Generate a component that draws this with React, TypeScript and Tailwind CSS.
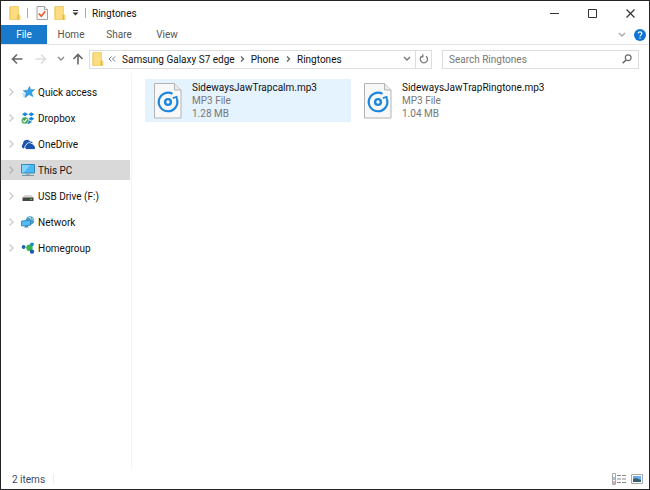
import type { ReactNode } from 'react';

function FolderIcon() {
  return (
    <svg width="12" height="14" viewBox="0 0 12 14" aria-hidden="true">
      <path d="M1 .5h8.500v8l1.500 .8v4.200H1z" fill="#fbdc80" stroke="#edc963" strokeWidth=".8" />
      <path d="M9 8.500l1 .5v4.500H8.500V9z" fill="#e8b93e" />
      <path d="M1 1v12.500" stroke="#f3ca57" />
    </svg>
  );
}

function PropertiesIcon() {
  return (
    <svg width="12" height="14" viewBox="0 0 12 14" aria-hidden="true">
      <path d="M1 .5h7.500l3 3v10H1z" fill="#f8f8f8" stroke="#a3a3a3" />
      <path d="M8.500 .5v3h3" fill="#fff" stroke="#a3a3a3" />
      <path d="M2.800 7.500l2.500 2.700 4-5" fill="none" stroke="#e8602c" strokeWidth="1.700" />
    </svg>
  );
}

function Chevron({ className, d = 'M2.500 1.500L6 5 2.500 8.500' }: { className: string; d?: string }) {
  return (
    <svg width="8" height="10" viewBox="0 0 8 10" fill="none" stroke="currentColor" className={className} aria-hidden="true">
      <path d={d} strokeWidth="1.400" />
    </svg>
  );
}

function DownChevron({ className }: { className: string }) {
  return (
    <svg width="8" height="6" viewBox="0 0 8 6" fill="none" stroke="currentColor" className={className} aria-hidden="true">
      <path d="M1 1l3 3 3-3" strokeWidth="1.400" />
    </svg>
  );
}

function Arrow({ d, className }: { d: string; className: string }) {
  return (
    <svg width="12" height="12" viewBox="0 0 12 12" fill="none" stroke="currentColor" strokeWidth="1.600" className={className} aria-hidden="true">
      <path d={d} />
    </svg>
  );
}

function AudioFileIcon() {
  return (
    <svg width="28" height="36" viewBox="0 0 28 36" className="shrink-0" aria-hidden="true">
      <path d="M.5 .5h20l6.500 6.500v28H.5z" fill="#f8f8f8" stroke="#b4b4b4" />
      <path d="M20.500 .5V7H27" fill="#e9e9e9" stroke="#b4b4b4" />
      <path d="M18.500 10.800a9.300 9.300 0 1 0 4.600 6" fill="none" stroke="#1c86dc" strokeWidth="2.200" />
      <path d="M18.800 15.200l3.700-1.200.6 3" fill="none" stroke="#1c86dc" strokeWidth="1.800" />
      <circle cx="14" cy="19" r="2.900" fill="#fff" stroke="#1c86dc" strokeWidth="2.400" />
    </svg>
  );
}

const placeIcons: Record<string, ReactNode> = {
  quick: (
    <>
      <path d="M8.500 .5l1.100 3.300 4-.1-3.100 2.600 1.300 4.200-3.600-2-4.200 3 1.200-4.600L2.300 4.700l4.400-.5z" fill="#35a3e6" stroke="#1f87d0" strokeWidth=".6" />
      <path d="M1 8h3M2 10h2" stroke="#8ccaf0" />
    </>
  ),
  dropbox: (
    <>
      <path d="M4 .2l3 2-3 2-3-2zM10.300 .2l3 2-3 2-3-2zM4 4.800l3 2-3 2-3-2zM10.300 4.800l3 2-3 2-3-2zM7.500 8l3.500 2-3.500 2L4 10z" fill="#1687e0" />
      <circle cx="4" cy="8.500" r="3.500" fill="#3fa84d" stroke="#d6efd6" strokeWidth=".6" />
      <path d="M2.300 8.500l1.300 1.300 2.400-2.700" fill="none" stroke="#fff" strokeWidth="1.200" />
    </>
  ),
  onedrive: (
    <>
      <path d="M2.500 10.500A2.500 2.500 0 0 1 2 6a4 4 0 0 1 7.200-2.500c1.300 0 2.300 .6 2.800 1.500" fill="#1955b0" />
      <path d="M5.500 11.500a2.400 2.400 0 0 1-.3-4.500A3.300 3.300 0 0 1 11 5.900c1.500-.1 2.300 .9 2.300 2a1.900 1.900 0 0 1 0 3.600z" fill="#1955b0" stroke="#fff" strokeWidth=".8" />
    </>
  ),
  pc: (
    <>
      <path d="M.5 .5h13v8.500H.5z" fill="#4bb7f5" stroke="#3589b8" />
      <path d="M1 1h8L3 8.500H1z" fill="#83d2fb" />
      <path d="M5 9.500h4v1.500H5z" fill="#9dabb4" />
      <path d="M1 11.500h12" stroke="#7196ad" />
    </>
  ),
  usb: (
    <>
      <path d="M3.500 5h7l2 3h-11z" fill="#d5d5d5" />
      <path d="M1.500 7.500h11V11h-11z" fill="#454545" />
      <path d="M9 9.300h2" stroke="#55d267" />
    </>
  ),
  network: (
    <>
      <circle cx="9" cy="4.500" r="4.300" fill="#4a9dc4" />
      <path d="M7 1l3 1-1 3M11 2l2 3" stroke="#b0dbe9" fill="none" />
      <path d="M.5 5l9-.8v5l-9 .8z" fill="#55baf3" stroke="#2680b8" strokeWidth=".8" />
      <path d="M4 10l3-.5v1.500l1.500 .5H3z" fill="#488aae" />
    </>
  ),
  homegroup: (
    <>
      <path d="M3 5l6 1 2-4M9 6l2 4" stroke="#b7d7dc" fill="none" />
      <circle cx="2.600" cy="5" r="1.900" fill="#1e64ae" />
      <circle cx="8.500" cy="5.800" r="3.200" fill="#39b54a" />
      <circle cx="11" cy="2.300" r="1.900" fill="#1d8acb" />
      <circle cx="11" cy="9.600" r="2.200" fill="#195da9" />
    </>
  ),
};

const places = [
  { icon: 'quick', label: 'Quick access' },
  { icon: 'dropbox', label: 'Dropbox' },
  { icon: 'onedrive', label: 'OneDrive' },
  { icon: 'pc', label: 'This PC' },
  { icon: 'usb', label: 'USB Drive (F:)' },
  { icon: 'network', label: 'Network' },
  { icon: 'homegroup', label: 'Homegroup' },
];

const files = [
  { name: 'SidewaysJawTrapcalm.mp3', size: '1.28 MB' },
  { name: 'SidewaysJawTrapRingtone.mp3', size: '1.04 MB' },
];

function TitleBar() {
  return (
    <header className="flex h-6 items-center pl-2">
      <FolderIcon />
      <span className="ml-1.5 h-2.5 w-px bg-[#aaa]" />
      <button aria-label="Properties" className="ml-2"><PropertiesIcon /></button>
      <button aria-label="New folder" className="ml-1.5"><FolderIcon /></button>
      <button aria-label="Customize Quick Access Toolbar" className="ml-1.5">
        <svg width="7" height="6" viewBox="0 0 7 6"><path d="M1 .5h5" stroke="#333" /><path d="M.5 2.500h6l-3 3z" fill="#333" /></svg>
      </button>
      <span className="ml-1.5 h-2.5 w-px bg-[#aaa]" />
      <h1 className="ml-1.5">Ringtones</h1>
      <div className="ml-auto flex">
        <button aria-label="Minimize" className="flex h-6 w-[38px] items-center justify-center">
          <svg width="9" height="9" viewBox="0 0 9 9" stroke="#333"><path d="M0 4.500h9" /></svg>
        </button>
        <button aria-label="Maximize" className="flex h-6 w-[38px] items-center justify-center">
          <svg width="9" height="9" viewBox="0 0 9 9" fill="none" stroke="#333"><path d="M.5 .5h8v8h-8z" /></svg>
        </button>
        <button aria-label="Close" className="flex h-6 w-[38px] items-center justify-center">
          <svg width="9" height="9" viewBox="0 0 9 9" stroke="#333"><path d="M.5 .5l8 8M8.500 .5l-8 8" strokeWidth="1.200" /></svg>
        </button>
      </div>
    </header>
  );
}

function Ribbon() {
  return (
    <nav className="flex h-5 items-stretch border-b border-[#e5e5e5] text-[#555]">
      <button className="w-[46px] bg-[#1979ca] text-white">File</button>
      <button className="w-12">Home</button>
      <button className="w-12">Share</button>
      <button className="w-12">View</button>
      <div className="ml-auto flex items-center gap-2 pr-[3px]">
        <button aria-label="Expand the Ribbon"><DownChevron className="text-[#aaa]" /></button>
        <button aria-label="Help">
          <svg width="12" height="12" viewBox="0 0 12 12">
            <circle cx="6" cy="6" r="6" fill="#0f75d4" />
            <path d="M4.200 4.600c0-2.500 3.700-2.300 3.600 0C7.800 6 6 5.800 6 7.500M6 8.500v1.300" fill="none" stroke="#fff" strokeWidth="1.200" />
          </svg>
        </button>
      </div>
    </nav>
  );
}

function AddressBar() {
  return (
    <div className="flex h-7 items-center pr-2.5">
      <div className="flex w-[88px] items-center pl-2.5">
        <button aria-label="Back"><Arrow d="M11.500 6H1.500M6 1.500L1.500 6 6 10.500" className="text-[#666]" /></button>
        <button aria-label="Forward" className="ml-3"><Arrow d="M.5 6h10M6 1.500L10.500 6 6 10.500" className="text-[#ddd]" /></button>
        <button aria-label="Recent locations" className="ml-2.5"><DownChevron className="text-[#888]" /></button>
        <button aria-label="Up" className="ml-[7px]"><Arrow d="M6 11.500V1.500M1.500 6L6 1.500 10.500 6" className="text-[#666]" /></button>
      </div>
      <div className="flex h-[19px] min-w-0 flex-1 items-center border border-[#ddd]">
        <span className="ml-0.5"><FolderIcon /></span>
        <svg width="8" height="6" viewBox="0 0 8 6" fill="none" stroke="#777" className="ml-1" aria-hidden="true">
          <path d="M3.500 .5L1 3l2.500 2.500M7 .5L4.500 3 7 5.500" />
        </svg>
        <button className="ml-1.5 whitespace-nowrap">Samsung Galaxy S7 edge</button>
        <Chevron className="ml-1 text-[#666]" d="M2 2.500L4.500 5 2 7.500" />
        <button className="ml-1">Phone</button>
        <Chevron className="ml-1.5 text-[#666]" d="M2 2.500L4.500 5 2 7.500" />
        <button className="ml-1">Ringtones</button>
        <button aria-label="Previous locations" className="mr-1 ml-auto"><DownChevron className="text-[#777]" /></button>
        <button aria-label="Refresh" className="flex h-full w-4 items-center justify-center border-l border-[#ddd]">
          <svg width="10" height="10" viewBox="0 0 10 10" fill="none" stroke="#777" strokeWidth="1.300">
            <path d="M7 2.300A3.600 3.600 0 1 1 3 2.200M3.800 .2v2.600H1.200" />
          </svg>
        </button>
      </div>
      <label className="ml-2.5 flex h-[19px] w-[197px] items-center border border-[#ddd] pr-1.5 pl-1.5">
        <input type="text" aria-label="Search Ringtones" placeholder="Search Ringtones" className="min-w-0 flex-1 outline-none placeholder:text-[#777]" />
        <svg width="10" height="10" viewBox="0 0 10 10" fill="none" stroke="#666" aria-hidden="true">
          <circle cx="6.200" cy="3.700" r="2.900" strokeWidth="1.200" />
          <path d="M4 6L.7 9.300" strokeWidth="1.600" />
        </svg>
      </label>
    </div>
  );
}

export default function App() {
  return (
    <div className="flex min-h-screen flex-col border border-[#252525] bg-white font-[Roboto,sans-serif] text-[10px] leading-[13px] text-[#111]">
      <TitleBar />
      <Ribbon />
      <AddressBar />

      <div className="flex flex-1">
        <aside className="w-[131px] shrink-0 border-r border-[#f4f4f4] pt-[9px]">
          <ul className="flex flex-col gap-1.5">
            {places.map(({ icon, label }) => (
              <li key={label} className="pr-px">
                <button className={`flex h-5 w-full items-center pl-1.5 ${icon === 'pc' ? 'bg-[#d9d9d9]' : ''}`}>
                  <Chevron className={icon === 'pc' ? 'text-[#b5b5b5]' : 'text-[#ccc]'} />
                  <svg width="14" height="12" viewBox="0 0 14 12" className="ml-1.5" aria-hidden="true">
                    {placeIcons[icon]}
                  </svg>
                  <span className="ml-[3px] whitespace-nowrap">{label}</span>
                </button>
              </li>
            ))}
          </ul>
        </aside>

        <main className="flex flex-1 flex-wrap content-start gap-1 pt-1.5 pl-[13px]">
          {files.map(({ name, size }, i) => (
            <button key={name} className={`flex h-[43px] w-[206px] items-center pl-[9px] text-left ${i === 0 ? 'bg-[#e5f3ff]' : ''}`}>
              <AudioFileIcon />
              <span className="ml-2.5 flex flex-col text-[#777]">
                <span className="text-[#111]">{name}</span>
                <span>MP3 File</span>
                <span>{size}</span>
              </span>
            </button>
          ))}
        </main>
      </div>

      <footer className="flex h-5 items-center pr-1.5 pl-[11px] text-[#3a4a66]">
        <span>2 items</span>
        <span className="ml-2 h-2.5 w-px bg-[#eee]" />
        <button aria-label="Details view" className="ml-auto">
          <svg width="14" height="12" viewBox="0 0 14 12">
            <path d="M.5 .5h3v11h-3z" fill="#fff" stroke="#aaa" />
            <path d="M1 4h2v3H1z" fill="#9bc8ea" />
            <path d="M1 8h2v3H1z" fill="#e7aaaa" />
            <path d="M5 2.500h4M10 2.500h4M5 6h4M10 6h4M5 9.500h4M10 9.500h4" stroke="#888" />
          </svg>
        </button>
        <button aria-label="Large icons view" className="ml-[5px]">
          <svg width="12" height="10" viewBox="0 0 12 10">
            <path d="M.5 .5h11v9H.5z" fill="#fff" stroke="#aaa" />
            <path d="M2 2h8v6H2z" fill="#69aef0" />
            <path d="M2 5l3-1 5 2v2H2z" fill="#35606e" />
          </svg>
        </button>
      </footer>
    </div>
  );
}
